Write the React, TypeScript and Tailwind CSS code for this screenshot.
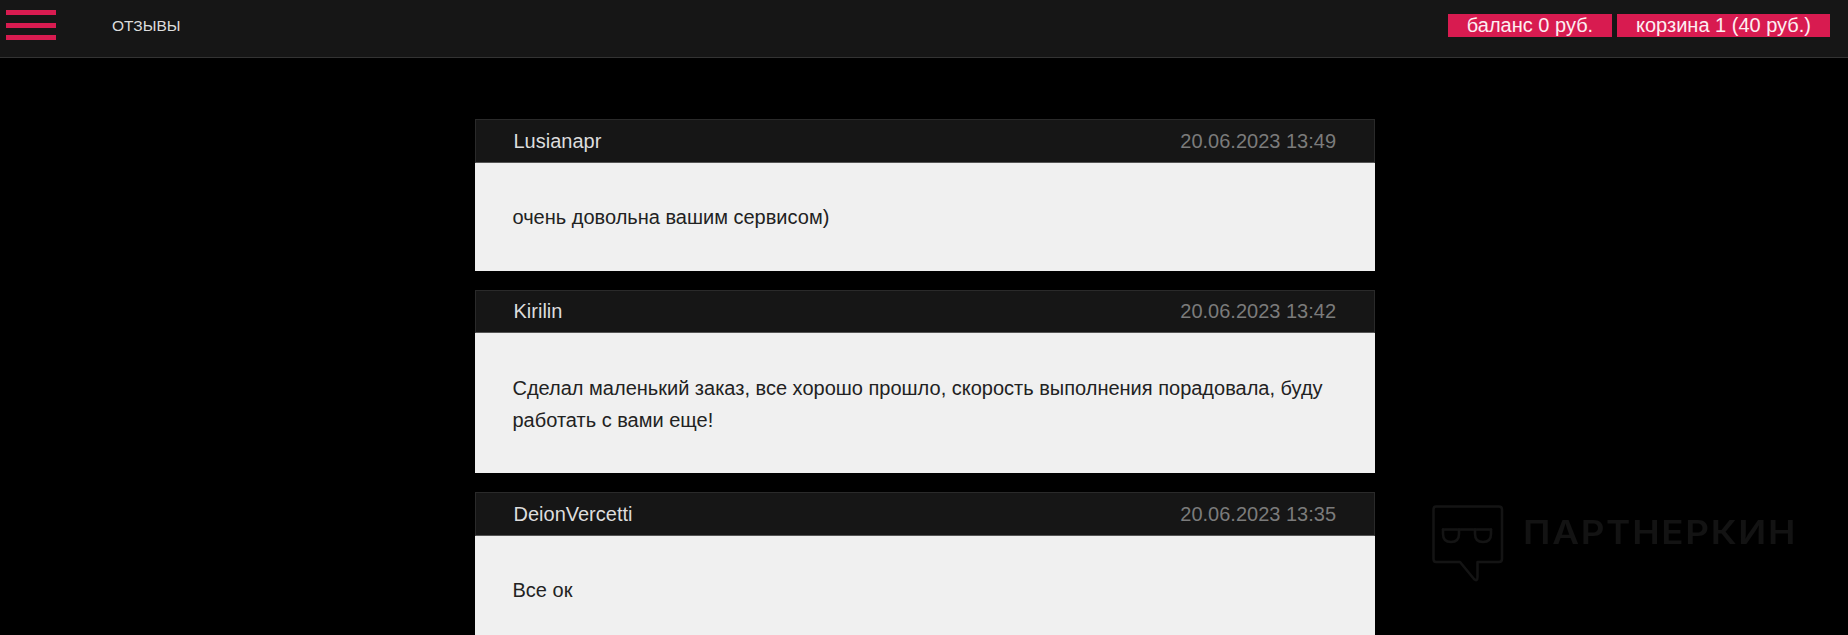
import React from 'react';

const reviews = [
  { name: 'Lusianapr', date: '20.06.2023 13:49', text: 'очень довольна вашим сервисом)' },
  {
    name: 'Kirilin',
    date: '20.06.2023 13:42',
    text: 'Сделал маленький заказ, все хорошо прошло, скорость выполнения порадовала, буду работать с вами еще!',
  },
  { name: 'DeionVercetti', date: '20.06.2023 13:35', text: 'Все ок' },
];

const Watermark = () => (
  <div className="fixed left-[1432px] top-[505px] flex items-start gap-[19px]">
    <svg width="72" height="78" viewBox="0 0 72 78" fill="none" stroke="#141414" strokeWidth="2.5" strokeLinejoin="round" strokeLinecap="round">
      <path d="M4 1.500H67Q70 1.500 70 4.500V54Q70 57 67 57H45.500V72Q45.500 77 42 74L28 57H4Q1.500 57 1.500 54V4.500Q1.500 1.500 4 1.500Z" />
      <path d="M11 24.500H59" />
      <path d="M11 24.500V29Q11 37 19 37Q27 37 27 29V24.500" />
      <path d="M43 24.500V29Q43 37 51 37Q59 37 59 29V24.500" />
    </svg>
    <span className="mt-[12px] origin-left scale-x-[1.15] text-[32px] leading-none font-semibold tracking-[1.5px] text-[#131313] font-['Inter',sans-serif]">ПАРТНЕРКИН</span>
  </div>
);

const App = () => {
  return (
    <div className="h-screen overflow-hidden bg-black font-['Liberation_Sans',Arial,sans-serif]">
      {/* Top bar */}
      <header className="h-[58px] bg-[#161616] border-b border-[#333333] flex items-start pl-[6px] pr-[18px]">
        <div className="w-[50px] mt-[10px] flex flex-col">
          <span className="h-[5px] bg-[#d81b50]" />
          <span className="h-[5px] mt-[8px] bg-[#d81b50]" />
          <span className="h-[5px] mt-[7px] bg-[#d81b50]" />
        </div>
        <span className="ml-[56px] mt-[16px] leading-[20px] text-[15.500px] uppercase text-[#dddddd]">отзывы</span>
        <div className="ml-auto mt-[14px] flex gap-[5px]">
          <span className="w-[164px] h-[23px] leading-[23px] bg-[#d81b50] text-center text-[20px] text-[#fdeef2]">баланс 0 руб.</span>
          <span className="w-[213px] h-[23px] leading-[23px] bg-[#d81b50] text-center text-[20px] text-[#fdeef2]">корзина 1 (40 руб.)</span>
        </div>
      </header>

      {/* Reviews */}
      <main className="w-[900px] ml-[475px] pt-[61.300px] flex flex-col gap-[19.100px]">
        {reviews.map((review) => (
          <div key={review.name}>
            <div className="h-[43.400px] bg-[#161616] border border-[#2a2a2a] border-b-[#555555] flex items-center justify-between pl-[37.500px] pr-[38px] text-[20px]">
              <span className="text-[#dddddd]">{review.name}</span>
              <span className="text-[#7b7b7b]">{review.date}</span>
            </div>
            <div className="bg-[#f0f0f0] pl-[37.500px] pr-[38px] pt-[38.700px] pb-[37.300px] text-[20px] leading-[32px] text-[#222222]">{review.text}</div>
          </div>
        ))}
      </main>

      <Watermark />
    </div>
  );
};

export default App;
